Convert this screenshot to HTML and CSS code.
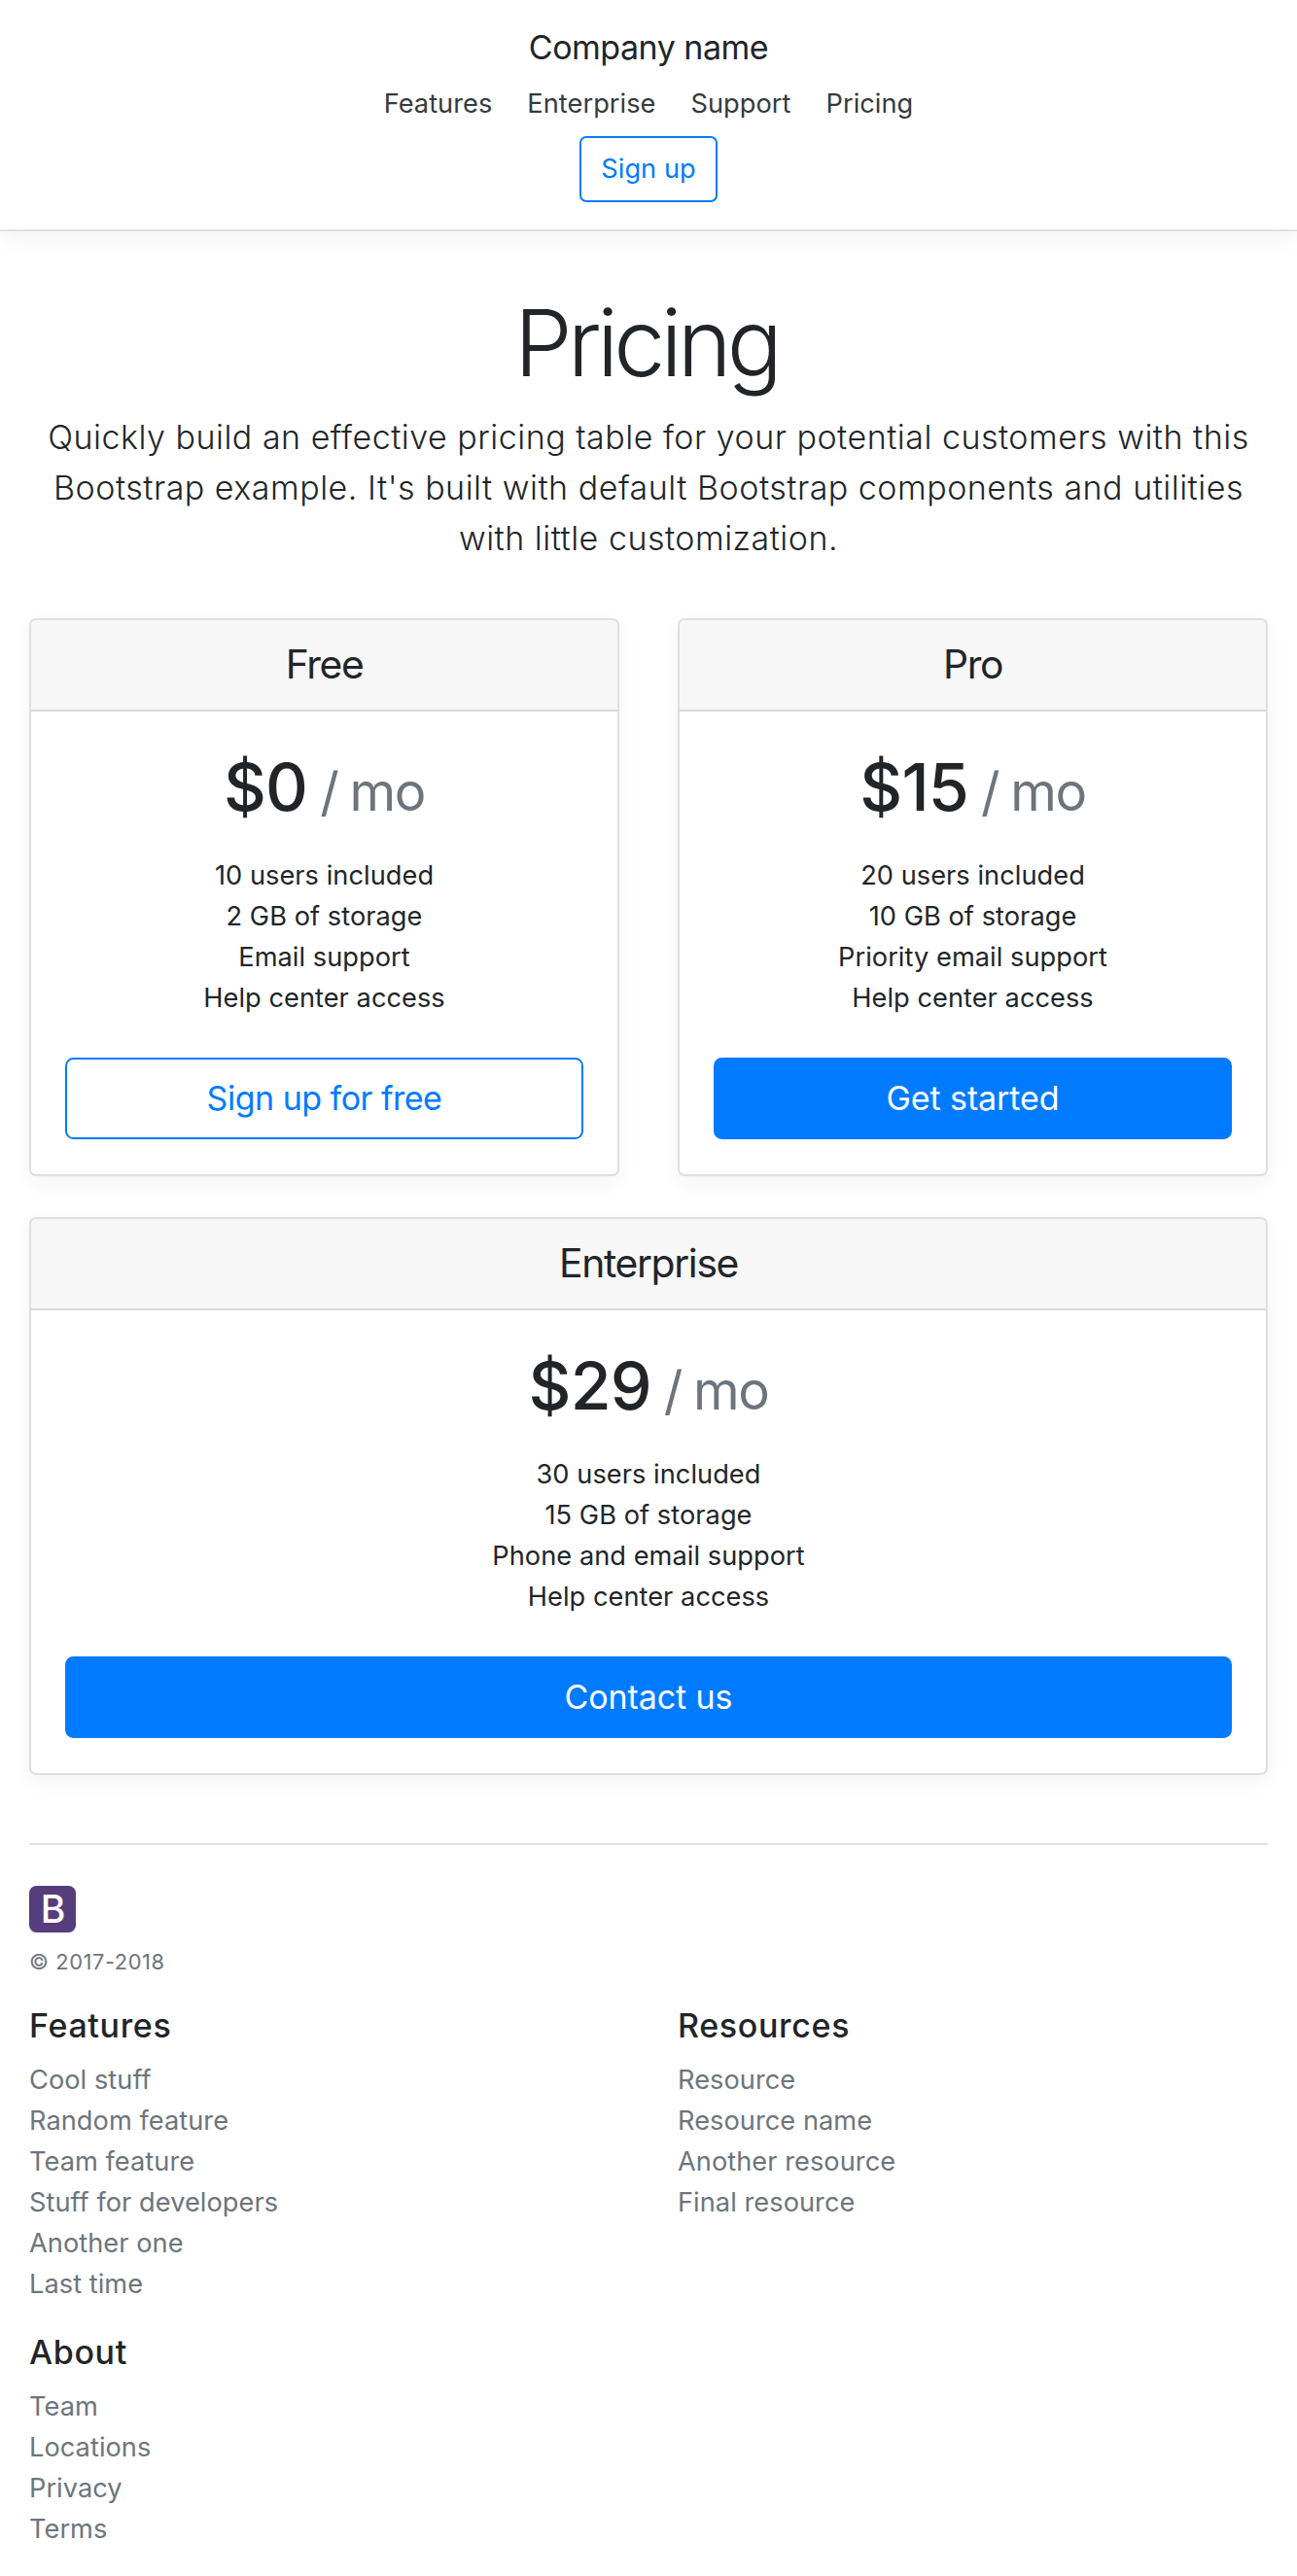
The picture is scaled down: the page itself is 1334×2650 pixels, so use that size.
FILE: index.html
```html
<!DOCTYPE html>
<html lang="en">
<head>
<meta charset="utf-8">
<title>Pricing</title>
<link rel="stylesheet" href="styles.css">
</head>
<body>
<header class="topbar">
  <h5 class="brand">Company name</h5>
  <nav class="nav"><a href="#">Features</a><a href="#">Enterprise</a><a href="#">Support</a><a href="#">Pricing</a></nav>
  <a class="btn btn-outline" href="#">Sign up</a>
</header>
<section class="intro">
  <h1 class="title">Pricing</h1>
  <p class="lead">Quickly build an effective pricing table for your potential customers with this<br>Bootstrap example. It's built with default Bootstrap components and utilities<br>with little customization.</p>
</section>
<main class="container">
  <div class="deck">
    <article class="card">
      <h4 class="card-header">Free</h4>
      <div class="card-body">
        <h2 class="price">$0 <small>/ mo</small></h2>
        <ul class="perks"><li>10 users included</li><li>2 GB of storage</li><li>Email support</li><li>Help center access</li></ul>
        <a class="btn btn-lg btn-outline" href="#">Sign up for free</a>
      </div>
    </article>
    <article class="card">
      <h4 class="card-header">Pro</h4>
      <div class="card-body">
        <h2 class="price">$15 <small>/ mo</small></h2>
        <ul class="perks"><li>20 users included</li><li>10 GB of storage</li><li>Priority email support</li><li>Help center access</li></ul>
        <a class="btn btn-lg btn-primary" href="#">Get started</a>
      </div>
    </article>
    <article class="card card-wide">
      <h4 class="card-header">Enterprise</h4>
      <div class="card-body">
        <h2 class="price">$29 <small>/ mo</small></h2>
        <ul class="perks"><li>30 users included</li><li>15 GB of storage</li><li>Phone and email support</li><li>Help center access</li></ul>
        <a class="btn btn-lg btn-primary" href="#">Contact us</a>
      </div>
    </article>
  </div>
  <footer class="footer">
    <div class="legal">
      <svg class="logo" viewBox="0 0 48 48"><rect width="48" height="48" rx="7.5" fill="#563d7c"/><text class="logo-letter" x="24.5" y="38" text-anchor="middle">B</text></svg>
      <small class="copyright">© 2017-2018</small>
    </div>
    <section>
      <h5>Features</h5>
      <ul><li><a href="#">Cool stuff</a></li><li><a href="#">Random feature</a></li><li><a href="#">Team feature</a></li><li><a href="#">Stuff for developers</a></li><li><a href="#">Another one</a></li><li><a href="#">Last time</a></li></ul>
    </section>
    <section>
      <h5>Resources</h5>
      <ul><li><a href="#">Resource</a></li><li><a href="#">Resource name</a></li><li><a href="#">Another resource</a></li><li><a href="#">Final resource</a></li></ul>
    </section>
    <section>
      <h5>About</h5>
      <ul><li><a href="#">Team</a></li><li><a href="#">Locations</a></li><li><a href="#">Privacy</a></li><li><a href="#">Terms</a></li></ul>
    </section>
  </footer>
</main>
</body>
</html>
```
FILE: styles.css
```css
* { box-sizing: border-box; }
body {
  margin: 0;
  background: #fff;
  color: #212529;
  font-family: Inter, "Liberation Sans", sans-serif;
  font-size: 27.2px;
  font-weight: 430;
  line-height: 42px;
  letter-spacing: .05px;
}
h1, h2, h4, h5, p, ul { margin: 0; padding: 0; font-weight: 550; }
ul { list-style: none; font-weight: 430; }
a { color: inherit; text-decoration: none; }

.topbar {
  display: flex;
  flex-direction: column;
  align-items: center;
  height: 238px;
  padding: 28px;
  border-bottom: 2px solid #dee2e6;
  box-shadow: 0 7px 21px rgba(0, 0, 0, .05);
}
.brand { font-size: 34px; font-weight: 430; letter-spacing: -.5px; }
.nav { display: flex; gap: 8px; margin: 16px 0 12px; color: #343a40; }
.nav a { padding: 0 14px; }

.btn {
  display: block;
  padding: 11px 20px;
  border: 2px solid #007bff;
  border-radius: 7px;
  text-align: center;
}
.btn-outline { color: #007bff; }
.btn-primary { background: #007bff; color: #fff; }
.btn-lg { padding: 14px 28px; border-radius: 8.4px; font-size: 34px; line-height: 52px; letter-spacing: -.1px; }
.btn-lg.btn-outline { letter-spacing: -.5px; }

.intro { padding: 57px 28px 28px; text-align: center; }
.title {
  margin-bottom: 13px;
  padding-right: 5px;
  font-size: 95px;
  font-weight: 330;
  line-height: 116px;
  letter-spacing: -4.9px;
}
.lead { margin-bottom: 28px; font-size: 34px; font-weight: 330; line-height: 52px; letter-spacing: .5px; white-space: nowrap; }

.container { padding: 0 30px; }
.deck { display: grid; grid-template-columns: 1fr 1fr; gap: 42px 60px; margin-bottom: 70px; text-align: center; }
.card { border: 2px solid rgba(0, 0, 0, .125); border-radius: 7px; box-shadow: 0 7px 21px rgba(0, 0, 0, .05); background: #fff; }
.card-wide { grid-column: 1 / -1; }
.card-header {
  padding: 20px 35px 22px;
  border-bottom: 2px solid rgba(0, 0, 0, .125);
  border-radius: 5px 5px 0 0;
  background: rgba(0, 0, 0, .03);
  font-size: 40.8px;
  font-weight: 430;
  line-height: 50px;
  letter-spacing: -1.35px;
}
.card-body { padding: 35px 35px 36px; }
.price { font-size: 68px; line-height: 84px; letter-spacing: -.9px; word-spacing: -4px; }
.price small { color: #6c757d; font-size: 80%; font-weight: 430; line-height: 1; letter-spacing: -1.4px; word-spacing: -2px; }
.perks { margin: 29px 0 40px; }

.footer { display: grid; grid-template-columns: 1fr 1fr; column-gap: 60px; padding-top: 42px; border-top: 2px solid #dee2e6; }
.legal { grid-column: 1 / -1; margin-bottom: 29px; }
.logo { display: block; width: 48px; height: 48px; margin-bottom: 14px; }
.logo-letter { fill: #fff; font-size: 39px; font-weight: 500; }
.copyright { display: block; color: #6c757d; font-size: 21.8px; line-height: 32px; letter-spacing: .6px; }
.footer h5 { margin-bottom: 14px; font-size: 34px; letter-spacing: .65px; }
.footer ul { margin-bottom: 28px; color: #6c757d; }
.footer section:last-child ul { margin-bottom: 27px; }
```
